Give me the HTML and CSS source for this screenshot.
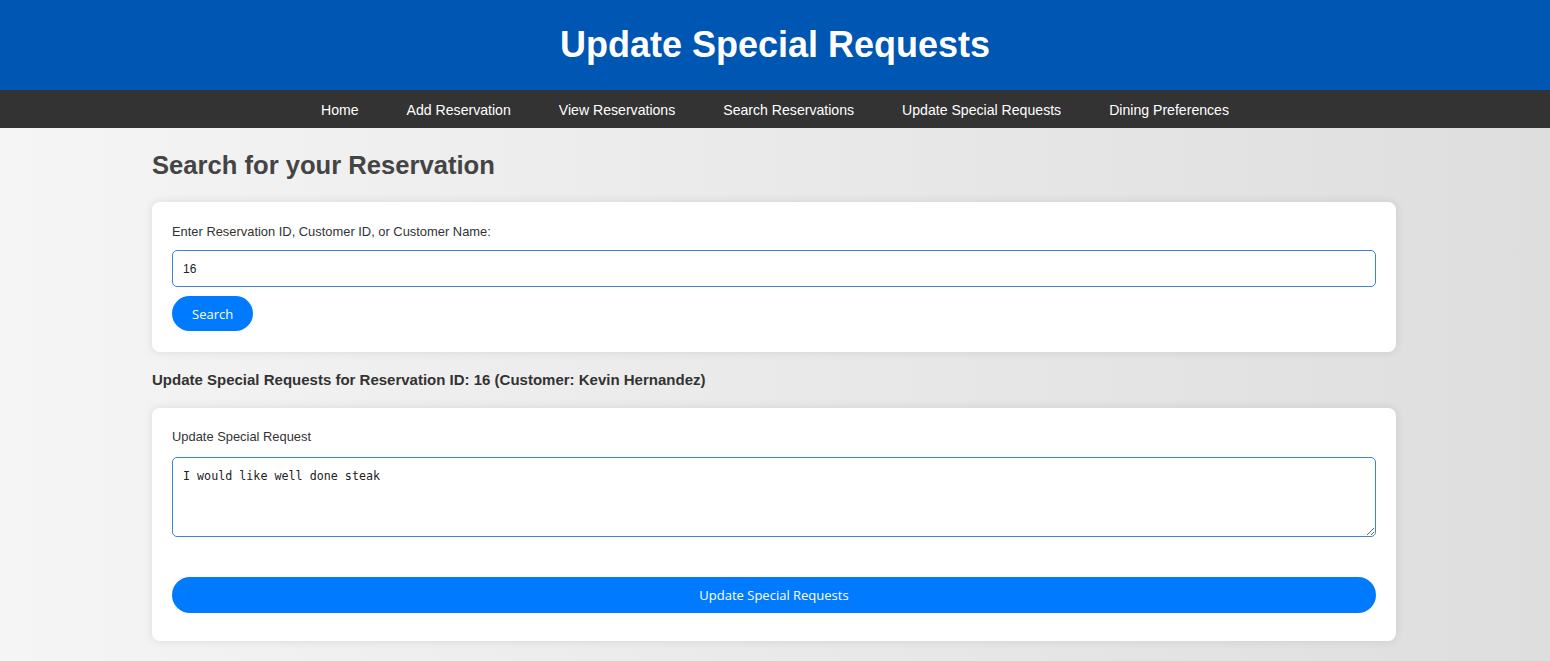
FILE: index.html
```html
<!DOCTYPE html>
<html lang="en">
<head>
<meta charset="utf-8">
<title>Update Special Requests</title>
<link rel="stylesheet" href="styles.css">
</head>
<body>
<header class="site-header">
  <h1>Update Special Requests</h1>
</header>
<nav class="site-nav">
  <a href="#">Home</a>
  <a href="#">Add Reservation</a>
  <a href="#">View Reservations</a>
  <a href="#">Search Reservations</a>
  <a href="#">Update Special Requests</a>
  <a href="#">Dining Preferences</a>
</nav>
<main class="container">
  <h2 class="page-title">Search for your Reservation</h2>
  <form class="card card-search">
    <label class="field-label" for="q">Enter Reservation ID, Customer ID, or Customer Name:</label>
    <input class="text-input" id="q" type="text" value="16">
    <button class="btn" type="button">Search</button>
  </form>
  <h3 class="section-title">Update Special Requests for Reservation ID: 16 (Customer: Kevin Hernandez)</h3>
  <form class="card card-update">
    <label class="field-label" for="req">Update Special Request</label>
    <textarea class="text-area" id="req">I would like well done steak</textarea>
    <button class="btn btn-full" type="button">Update Special Requests</button>
  </form>
</main>
</body>
</html>
```
FILE: styles.css
```css
html, body {
  margin: 0;
  padding: 0;
}
body {
  font-family: "Liberation Sans", Arial, sans-serif;
  color: #333;
  background: linear-gradient(to right, #f5f5f5, #dedede);
  min-height: 661px;
}
.site-header {
  background: #0056b3;
  height: 90px;
  display: flex;
  align-items: center;
  justify-content: center;
}
.site-header h1 {
  margin: 0;
  color: #fff;
  font-size: 36px;
  font-weight: bold;
  line-height: 40px;
}
.site-nav {
  background: #333;
  height: 38px;
  box-sizing: border-box;
  padding-top: 2px;
  display: flex;
  justify-content: center;
  align-items: center;
}
.site-nav a {
  color: #fff;
  text-decoration: none;
  font-size: 14.1px;
  padding: 0 24px;
}
.container {
  width: 1244px;
  margin: 0 0 0 calc(50% - 623px);
  padding-top: 23px;
}
.page-title {
  margin: 0 0 23px 0;
  font-size: 25.6px;
  line-height: 28px;
  color: #444;
}
.card {
  background: #fff;
  border-radius: 8px;
  box-shadow: 0 0 10px rgba(0, 0, 0, 0.1);
  padding: 21px 20px 21px;
  display: flex;
  flex-direction: column;
  align-items: flex-start;
}
.field-label {
  font-size: 12.9px;
  line-height: 18px;
  margin-bottom: 9px;
  color: #333;
}
.text-input {
  box-sizing: border-box;
  width: 100%;
  height: 37px;
  border: 1px solid #3d83d3;
  border-radius: 5px;
  padding: 0 10px;
  font-family: "Liberation Sans", Arial, sans-serif;
  font-size: 12px;
  color: #222;
  outline: none;
  margin: 0 0 9px;
}
.text-area {
  box-sizing: border-box;
  width: 100%;
  height: 80px;
  border: 1px solid #3d83d3;
  border-radius: 5px;
  padding: 11px 10px;
  font-family: "DejaVu Sans Mono", "Liberation Mono", monospace;
  font-size: 11.7px;
  color: #222;
  outline: none;
  margin: 0 0 40px;
  resize: both;
}
.btn {
  background: #007bff;
  color: #fff;
  border: none;
  border-radius: 20px;
  height: 35px;
  padding: 0 20px;
  font-family: "Open Sans", sans-serif;
  font-size: 13px;
  cursor: pointer;
}
.btn-full {
  width: 100%;
  height: 36px;
}
.card-update {
  padding-top: 20px;
  padding-bottom: 28px;
}
.card-update .field-label {
  margin-bottom: 11px;
}
.section-title {
  margin: 19px 0 19px;
  font-size: 15px;
  line-height: 18px;
  color: #333;
}
```
